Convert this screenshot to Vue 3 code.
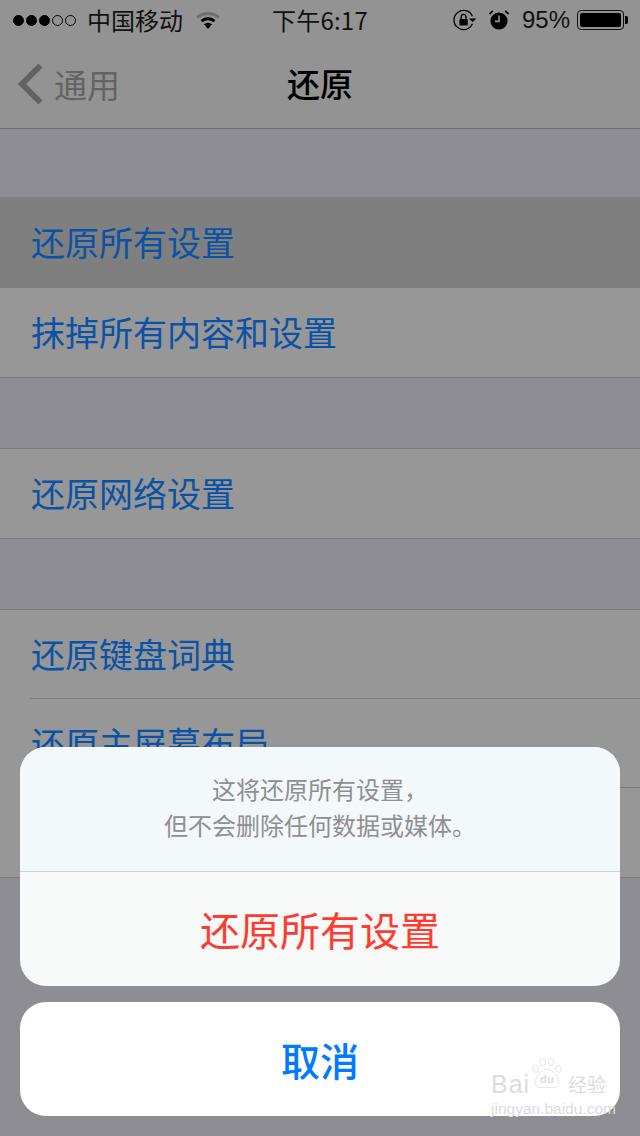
<template>
  <div class="screen">
    <div class="status-bar">
      <div class="status-left">
        <span class="signal">
          <i v-for="n in 3" :key="'on' + n" class="dot on"></i>
          <i v-for="n in 2" :key="'off' + n" class="dot"></i>
        </span>
        <span class="carrier">中国移动</span>
        <svg class="wifi" width="26" height="20" viewBox="0 0 26 20">
          <path d="M2 7.5C8 2 18 2 24 7.5" fill="none" stroke="#6f6f6f" stroke-width="3" />
          <path d="M6.5 11.2C10.5 8 15.5 8 19.5 11.2" fill="none" stroke="#000" stroke-width="3" />
          <path d="M9 14.2C11.5 12.2 14.5 12.2 17 14.2L13 19Z" fill="#000" />
        </svg>
      </div>
      <div class="status-time">下午6:17</div>
      <div class="status-right">
        <svg class="lock" width="24" height="22" viewBox="0 0 24 22">
          <path d="M19.4 7.2A9.6 9.6 0 1 0 19.4 14.8" fill="none" stroke="#000" stroke-width="1.3" />
          <path d="M16 9.4H23.4L19.7 13Z" fill="#000" />
          <rect x="6.4" y="10" width="8.4" height="6.6" rx="1" fill="#000" />
          <path d="M8.2 10V7.8A2.4 2.4 0 0 1 13 7.8V10" fill="none" stroke="#000" stroke-width="1.4" />
        </svg>
        <svg class="alarm" width="22" height="22" viewBox="0 0 22 22">
          <circle cx="11" cy="12" r="8.6" fill="#000" />
          <path d="M11 6.5V12.4H6.8" fill="none" stroke="#939393" stroke-width="1.6" />
          <path d="M1.4 5.2L4.8 1.8M20.6 5.2L17.2 1.8" stroke="#000" stroke-width="1.8" />
        </svg>
        <span class="percent">95%</span>
        <span class="battery"><span class="battery-fill"></span></span>
        <span class="battery-tip"></span>
      </div>
    </div>

    <div class="nav-bar">
      <div class="nav-back">
        <svg width="28" height="44" viewBox="0 0 28 44">
          <path d="M24.5 3.5L6 22L24.5 40.5" fill="none" stroke="#636363" stroke-width="6" />
        </svg>
        <span>通用</span>
      </div>
      <div class="nav-title">还原</div>
    </div>

    <div class="gap first-gap"></div>
    <div class="group">
      <div class="row pressed">还原所有设置</div>
      <div class="row">抹掉所有内容和设置</div>
    </div>

    <div class="gap"></div>
    <div class="group">
      <div class="row">还原网络设置</div>
    </div>

    <div class="gap"></div>
    <div class="group">
      <div class="row inset">还原键盘词典</div>
      <div class="row inset">还原主屏幕布局</div>
      <div class="row"></div>
    </div>

    <div class="sheet-layer">
      <div class="sheet">
        <div class="sheet-message">
          <p>这将还原所有设置，</p>
          <p>但不会删除任何数据或媒体。</p>
        </div>
        <div class="sheet-action">还原所有设置</div>
      </div>
      <div class="sheet-cancel">取消</div>
    </div>

    <div class="watermark">
      <div class="mark-top">
        <span class="mark-bai">Bai</span>
        <svg class="mark-paw" width="70" height="64" viewBox="0 0 70 64">
          <g fill="none" stroke="#dcdcdc" stroke-width="1.5">
            <ellipse cx="13" cy="22" rx="5.5" ry="7" />
            <ellipse cx="27" cy="9" rx="5.5" ry="7" />
            <ellipse cx="43" cy="9" rx="5.5" ry="7" />
            <ellipse cx="57" cy="22" rx="5.5" ry="7" />
            <path d="M35 22C24 22 12 38 12 48C12 60 26 60 35 57C44 60 58 60 58 48C58 38 46 22 35 22Z" />
          </g>
          <text x="35" y="50" text-anchor="middle" class="mark-du">du</text>
        </svg>
        <span class="mark-jy">经验</span>
      </div>
      <div class="mark-url">jingyan.baidu.com</div>
    </div>
  </div>
</template>

<script setup>
</script>

<style>
html,
body {
  margin: 0;
  background: #8e8d93;
}
</style>

<style scoped>
.screen {
  position: relative;
  width: 640px;
  height: 1136px;
  overflow: hidden;
  background: #8e8d93;
  font-family: "Noto Sans CJK SC", "Liberation Sans", sans-serif;
}

.status-bar {
  display: grid;
  grid-template-columns: 1fr auto 1fr;
  align-items: center;
  height: 40px;
  background: #939393;
  color: #000;
  font-size: 24px;
}

.status-left {
  display: flex;
  align-items: center;
  padding-left: 13px;
}

.signal {
  display: flex;
  gap: 2px;
  margin-right: 11px;
}

.dot {
  width: 11px;
  height: 11px;
  box-sizing: border-box;
  border: 1px solid #000;
  border-radius: 50%;
}

.dot.on {
  background: #000;
}

.carrier {
  line-height: 40px;
  color: #111;
}

.wifi {
  margin-left: 12px;
}

.status-time {
  font-family: "Noto Sans CJK SC", "Liberation Sans", sans-serif;
  line-height: 40px;
  color: #111;
  letter-spacing: 0.2px;
}

.status-right {
  display: flex;
  align-items: center;
  justify-content: flex-end;
  padding-right: 12px;
  color: #111;
}

.alarm {
  margin-left: 11px;
}

.percent {
  margin-left: 12px;
  font-family: "Liberation Sans", sans-serif;
  font-size: 24px;
}

.battery {
  display: block;
  box-sizing: border-box;
  width: 47px;
  height: 20px;
  margin-left: 7px;
  padding: 2px;
  border: 1px solid #111;
  border-radius: 4px;
}

.battery-fill {
  display: block;
  width: 41px;
  height: 14px;
  border-radius: 2px;
  background: #000;
}

.battery-tip {
  width: 3px;
  height: 8px;
  margin-left: 1px;
  border-radius: 0 2px 2px 0;
  background: #000;
}

.nav-bar {
  position: relative;
  display: flex;
  align-items: center;
  justify-content: center;
  box-sizing: border-box;
  height: 89px;
  border-bottom: 1px solid #6e6e6e;
  background: #939393;
}

.nav-back {
  position: absolute;
  top: 0;
  left: 16px;
  display: flex;
  align-items: center;
  height: 88px;
  color: #636363;
  font-size: 33px;
}

.nav-back span {
  margin-left: 10px;
}

.nav-title {
  margin-top: -2px;
  color: #000;
  font-size: 33px;
  font-weight: 500;
}

.gap {
  height: 70px;
}

.first-gap {
  height: 68px;
}

.group {
  background: #979797;
}

.gap + .group {
  border-top: 1px solid #7c7c7c;
  border-bottom: 1px solid #7c7c7c;
}

.first-gap + .group {
  border-top: 0;
}

.row {
  box-sizing: border-box;
  height: 89px;
  padding-left: 31px;
  color: #0a52a5;
  font-size: 34px;
  line-height: 88px;
}

.row.pressed {
  height: 91px;
  background: #7f7f7f;
  line-height: 90px;
}

.row.inset {
  position: relative;
}

.row.inset::after {
  content: "";
  position: absolute;
  right: 0;
  bottom: 0;
  left: 30px;
  height: 1px;
  background: #7c7c7c;
}

.sheet-layer {
  position: absolute;
  right: 20px;
  bottom: 20px;
  left: 20px;
  display: flex;
  flex-direction: column;
  gap: 16px;
}

.sheet {
  overflow: hidden;
  border-radius: 26px;
  background: #f8f9f9;
}

.sheet-message {
  display: flex;
  flex-direction: column;
  justify-content: center;
  box-sizing: border-box;
  height: 125px;
  padding-bottom: 4px;
  border-bottom: 1px solid #c8d2da;
  background: #f3f8fa;
  color: #8f8f8f;
  font-size: 24px;
  line-height: 36px;
  text-align: center;
}

.sheet-message p {
  margin: 0;
}

.sheet-action {
  height: 114px;
  color: #ff3b30;
  font-size: 40px;
  line-height: 114px;
  text-align: center;
}

.sheet-cancel {
  height: 114px;
  border-radius: 26px;
  background: #fff;
  color: #007aff;
  font-size: 39px;
  font-weight: 500;
  line-height: 114px;
  text-align: center;
}

.watermark {
  position: absolute;
  top: 1066px;
  left: 491px;
  width: 115px;
  color: #dcdcdc;
}

.mark-top {
  position: relative;
  display: flex;
  align-items: center;
  height: 36px;
}

.mark-bai {
  font-family: "Liberation Sans", sans-serif;
  font-size: 25px;
  line-height: 36px;
  letter-spacing: 1px;
}

.mark-paw {
  position: absolute;
  top: -19px;
  left: 38px;
  width: 36px;
  height: 54px;
}

.mark-du {
  fill: #dcdcdc;
  font-family: "Liberation Sans", sans-serif;
  font-size: 22px;
  font-weight: 700;
}

.mark-jy {
  position: absolute;
  top: 0;
  right: 0;
  font-size: 19px;
  line-height: 36px;
}

.mark-url {
  margin-top: -2px;
  font-family: "Liberation Sans", sans-serif;
  font-size: 15.5px;
  line-height: 18px;
  white-space: nowrap;
}
</style>
